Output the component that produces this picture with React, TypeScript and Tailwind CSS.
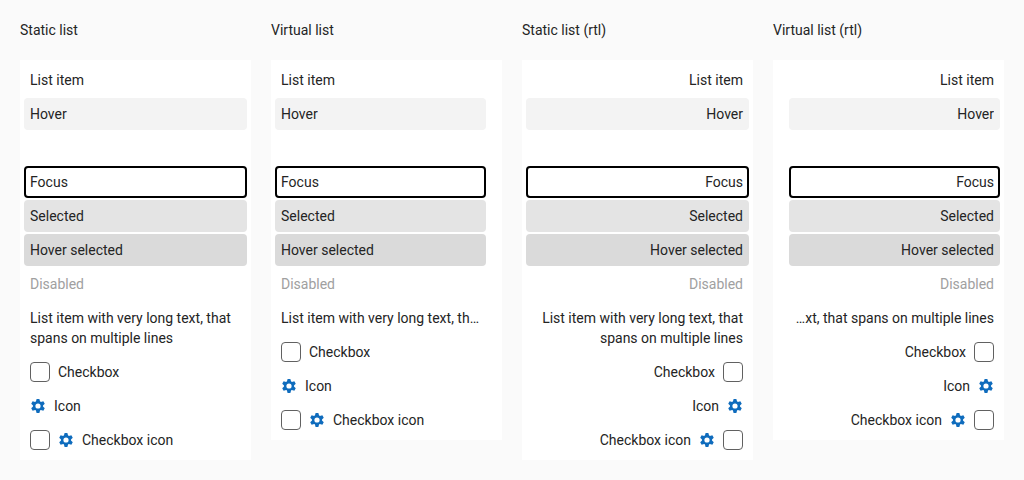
type Item = {
  text: string;
  state?: 'hover' | 'focus' | 'selected' | 'hoverSelected' | 'disabled' | 'hidden';
  checkbox?: boolean;
  icon?: boolean;
};

const items: Item[] = [
  { text: 'List item' },
  { text: 'Hover', state: 'hover' },
  { text: '', state: 'hidden' },
  { text: 'Focus', state: 'focus' },
  { text: 'Selected', state: 'selected' },
  { text: 'Hover selected', state: 'hoverSelected' },
  { text: 'Disabled', state: 'disabled' },
  { text: 'List item with very long text, that spans on multiple lines' },
  { text: 'Checkbox', checkbox: true },
  { text: 'Icon', icon: true },
  { text: 'Checkbox icon', checkbox: true, icon: true },
];

const stateClasses = {
  hover: 'bg-[#f3f3f3]',
  focus: 'outline-2 -outline-offset-2 outline-black',
  selected: 'bg-[#e4e4e4]',
  hoverSelected: 'bg-[#dadada]',
  disabled: 'text-[#a0a0a0]',
  hidden: 'invisible',
};

const toothAngles = [0, 60, 120, 180, 240, 300];

function GearIcon() {
  return (
    <svg viewBox="0 0 16 16" className="size-4 shrink-0 fill-[#0f6cbd] stroke-[#0f6cbd]" aria-hidden="true">
      <circle cx="8" cy="8" r="3.8" fill="none" strokeWidth="2.4" />
      {toothAngles.map((angle) => (
        <path key={angle} d="M6.6 1h2.8l.9 3.4H5.7z" stroke="none" transform={`rotate(${angle} 8 8)`} />
      ))}
    </svg>
  );
}

function ListItem({ item, virtual }: { item: Item; virtual?: boolean }) {
  const Row = item.checkbox ? 'label' : 'div';
  return (
    <li className={`rounded-[4px] ${item.state ? stateClasses[item.state] : ''}`}>
      <Row className="flex min-h-8 items-center gap-2 px-1.5 py-1.5">
        {item.checkbox && (
          <input
            type="checkbox"
            className="-my-1 size-5 shrink-0 appearance-none rounded-[4px] border border-[#616161] bg-white checked:bg-[#0f6cbd]"
          />
        )}
        {item.icon && <GearIcon />}
        <span className={virtual ? 'min-w-0 truncate' : 'min-w-0'}>{item.text}</span>
      </Row>
    </li>
  );
}

function ListSection({ title, virtual, rtl }: { title: string; virtual?: boolean; rtl?: boolean }) {
  return (
    <section className="min-w-0">
      <h2 className="mb-5">{title}</h2>
      <ul
        dir={rtl ? 'rtl' : 'ltr'}
        aria-label={title}
        className={`flex flex-col gap-0.5 bg-white py-1 ps-1 ${virtual ? 'pe-4' : 'pe-1'}`}
      >
        {items.map((item, index) => (
          <ListItem key={index} item={item} virtual={virtual} />
        ))}
      </ul>
    </section>
  );
}

export default function App() {
  return (
    <main className="grid min-h-screen grid-cols-4 items-start gap-5 bg-[#fafafa] p-5 font-['Roboto',sans-serif] text-sm leading-5 text-[#242424]">
      <ListSection title="Static list" />
      <ListSection title="Virtual list" virtual />
      <ListSection title="Static list (rtl)" rtl />
      <ListSection title="Virtual list (rtl)" virtual rtl />
    </main>
  );
}
